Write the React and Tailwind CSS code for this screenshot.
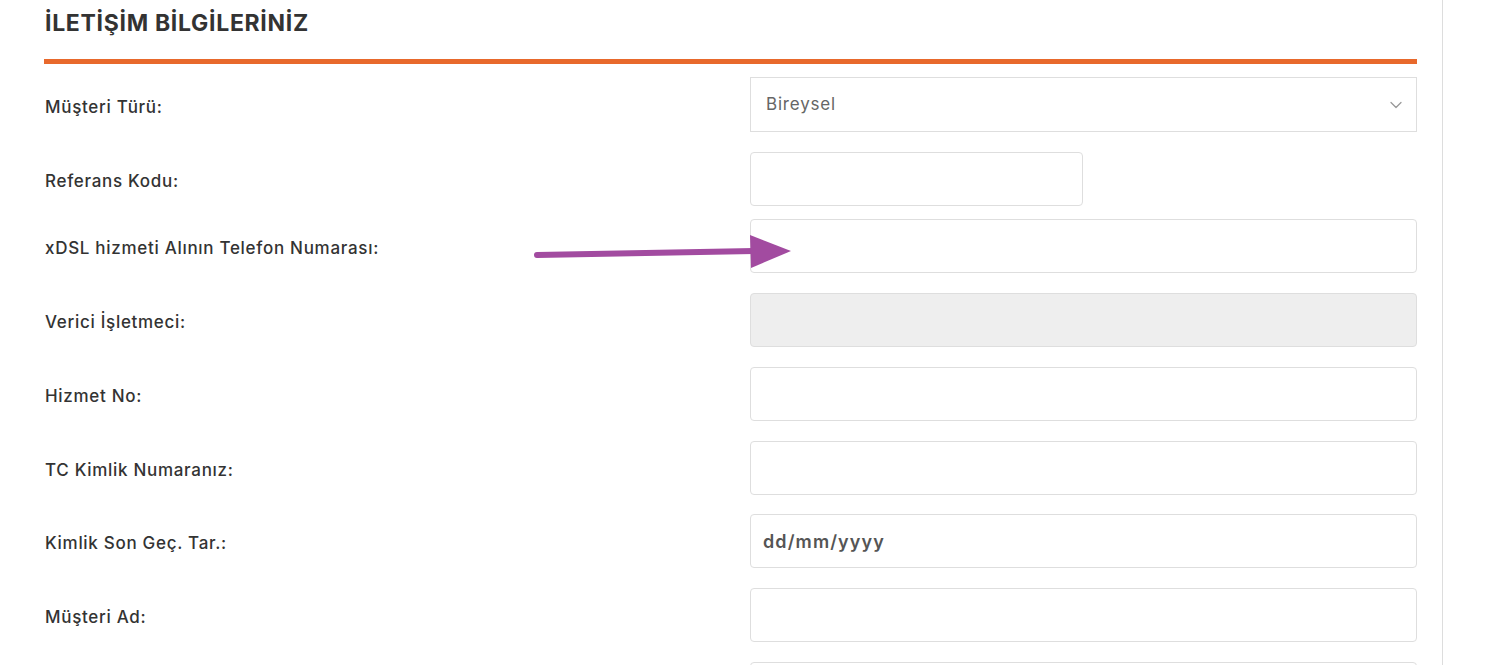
import { ChevronDown } from 'lucide-react'

const ROWS = [
  { label: 'Referans Kodu:', kind: 'short', mt: 'mt-5' },
  { label: 'xDSL hizmeti Alının Telefon Numarası:', kind: 'text', mt: 'mt-[13px]', arrow: true },
  { label: 'Verici İşletmeci:', kind: 'disabled', mt: 'mt-5' },
  { label: 'Hizmet No:', kind: 'text', mt: 'mt-5' },
  { label: 'TC Kimlik Numaranız:', kind: 'text', mt: 'mt-5' },
  { label: 'Kimlik Son Geç. Tar.:', kind: 'date', mt: 'mt-[19px]' },
  { label: 'Müşteri Ad:', kind: 'text', mt: 'mt-5' },
  { label: '', kind: 'text', mt: 'mt-5' },
]

function Field({ kind }) {
  if (kind === 'short') {
    return <div className="h-[54px] w-[333px] rounded border border-[#dedede] bg-white" />
  }
  if (kind === 'disabled') {
    return <div className="h-[54px] rounded border border-[#dedede] bg-[#eeeeee]" />
  }
  if (kind === 'date') {
    return (
      <div className="h-[54px] rounded border border-[#dedede] bg-white flex items-center pl-[12px] text-[18px] font-semibold text-[#555] tracking-[1.1px]">
        dd/mm/yyyy
      </div>
    )
  }
  return <div className="h-[54px] rounded border border-[#dedede] bg-white" />
}

function Arrow() {
  return (
    <svg className="absolute left-[-220px] top-[12px] pointer-events-none" width="270" height="40" viewBox="0 0 270 40">
      <line x1="7" y1="24" x2="224" y2="20" stroke="#a24ba0" strokeWidth="6" strokeLinecap="round" />
      <polygon points="220,4 261,20 221,37" fill="#a24ba0" />
    </svg>
  )
}

export default function App() {
  return (
    <div className="min-h-[665px] bg-white font-['Inter','Open_Sans',sans-serif] text-[#333] overflow-hidden">
      <div className="flex">
        <div className="w-[1443px] pl-[44px] pr-[25px] pt-[8px] border-r border-[#dddddd] min-h-[665px]">
          <h2 className="text-[23px] font-bold tracking-[0.7px] text-[#333] leading-[30px] pl-px">İLETİŞİM BİLGİLERİNİZ</h2>
          <div className="mt-[21px] h-[5px] bg-[#e8692c]" />

          <div className="mt-[13px] grid grid-cols-[706px_1fr] items-center">
            <div className="pl-px pt-[6px] text-[17px] font-medium tracking-[0.7px]">Müşteri Türü:</div>
            <div className="h-[55px] border border-[#dedede] bg-white flex items-center justify-between pl-[15px] pr-[10px] text-[17px] tracking-[0.8px] text-[#666]">
              <span>Bireysel</span>
              <ChevronDown size={20} strokeWidth={1.5} className="text-[#999]" />
            </div>
          </div>

          {ROWS.map((row, i) => (
            <div key={i} className={`${row.mt} grid grid-cols-[706px_1fr] items-center`}>
              <div className="pl-px pt-[6px] text-[17px] font-medium tracking-[0.7px]">{row.label}</div>
              <div className="relative">
                <Field kind={row.kind} />
                {row.arrow && <Arrow />}
              </div>
            </div>
          ))}
        </div>
        <div className="flex-1" />
      </div>
    </div>
  )
}
